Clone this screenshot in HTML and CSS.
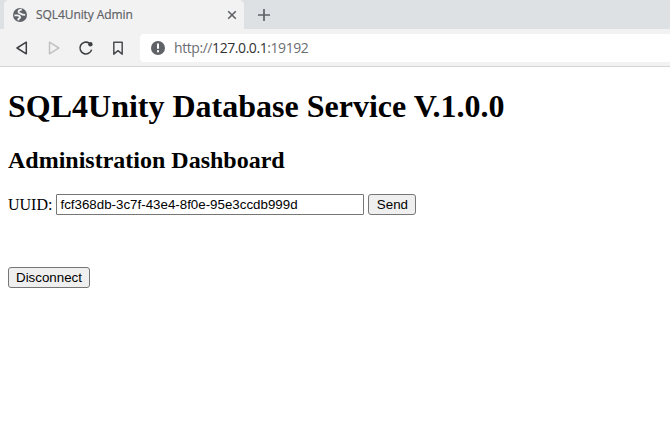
FILE: index.html
```html
<!DOCTYPE html>
<html lang="en">
<head>
<meta charset="utf-8">
<title>SQL4Unity Admin</title>
<link rel="stylesheet" href="styles.css">
</head>
<body>
<header class="browser">
  <div class="tabs">
    <div class="tab">
      <svg class="globe" width="14" height="14" viewBox="0 0 14 14"><circle cx="7" cy="7" r="7" fill="#5f6368"/><path d="M8.8 1.5C6.2 1.8 5.2 3 5.6 4.3c.4 1.2 2 .9 2.8 1.7.9.8 1.6 1 3.8.9M1.4 7.4h2.8c1.9 0 3 .8 2.9 2-.1 1-1.5.9-1.7 1.7l-.1 1.2" fill="none" stroke="#f2f2f2" stroke-width="1.9"/></svg>
      <span class="tab-title">SQL4Unity Admin</span>
      <svg class="close" width="10" height="10" viewBox="0 0 10 10"><path d="M1.2 1.2l7.6 7.6M8.8 1.2L1.2 8.8" stroke="#5f6368" stroke-width="1.6"/></svg>
    </div>
    <svg class="new-tab" width="12" height="12" viewBox="0 0 12 12"><path d="M6 0v12M0 6h12" stroke="#5f6368" stroke-width="1.7"/></svg>
  </div>
  <div class="toolbar">
    <svg class="tool" width="16" height="16" viewBox="0 0 16 16"><path d="M12.3 2.2v11.6L3 8z" fill="none" stroke="#3e4043" stroke-width="1.5" stroke-linejoin="round"/></svg>
    <svg class="tool" width="16" height="16" viewBox="0 0 16 16"><path d="M3.5 2.2v11.6L12.8 8z" fill="none" stroke="#c2c2c2" stroke-width="1.5" stroke-linejoin="round"/></svg>
    <svg class="tool" width="16" height="16" viewBox="0 0 16 16"><path d="M11.3 3.2A5.9 5.9 0 1 0 13.6 9.6" fill="none" stroke="#3e4043" stroke-width="1.6"/><circle cx="12.4" cy="4.3" r="2.2" fill="#3e4043"/></svg>
    <svg class="tool" width="16" height="16" viewBox="0 0 16 16"><path d="M3.8 2.2h8.4v12L8 10.7l-4.2 3.5z" fill="none" stroke="#4b4d50" stroke-width="1.5" stroke-linejoin="round"/></svg>
    <div class="address">
      <svg class="warning" width="14" height="14" viewBox="0 0 14 14"><circle cx="7" cy="7" r="7" fill="#5f6368"/><path d="M7 2.5v5.3M7 9.3v2" stroke="#fff" stroke-width="2"/></svg>
      <span class="url">http://<span class="host">127.0.0.1</span>:19192</span>
    </div>
  </div>
</header>
<main class="page">
  <h1>SQL4Unity Database Service V.1.0.0</h1>
  <h2>Administration Dashboard</h2>
  <form class="uuid-form">
    <label for="uuid">UUID:</label>
    <input id="uuid" type="text" value="fcf368db-3c7f-43e4-8f0e-95e3ccdb999d">
    <button class="send" type="button">Send</button>
  </form>
  <button class="disconnect" type="button">Disconnect</button>
</main>
</body>
</html>
```
FILE: styles.css
```css
* { box-sizing: border-box; }
body {
  margin: 0;
  background: #fff;
  color: #000;
  font-family: "Liberation Serif", serif;
  overflow: hidden;
}
svg { display: block; flex: none; }
.browser {
  height: 67px;
  background: #f2f2f2;
  border-bottom: 1px solid #d5d5d5;
  font-family: "Open Sans", "Noto Sans", sans-serif;
}
.tabs {
  display: flex;
  align-items: center;
  height: 29px;
  padding-left: 4px;
  background: #dee1e4;
}
.tab {
  display: flex;
  align-items: center;
  width: 240px;
  height: 29px;
  padding: 1px 7px 0 9px;
  background: #f2f2f2;
  border-radius: 5px 5px 0 0;
}
.tab-title {
  margin-left: 9px;
  color: #5f6368;
  font-size: 12px;
  letter-spacing: -0.08px;
  line-height: 16px;
  white-space: nowrap;
  -webkit-text-stroke: 0.2px #5f6368;
}
.close { margin-left: auto; }
.new-tab { margin: 1px 0 0 14px; }
.toolbar {
  display: flex;
  align-items: center;
  height: 37px;
  padding-left: 14px;
}
.tool { margin-right: 16px; }
.address {
  display: flex;
  align-items: center;
  flex: 1;
  height: 28px;
  margin-left: -2px;
  padding-left: 11px;
  background: #fff;
  border-radius: 4px 0 0 4px;
}
.url {
  margin-left: 9px;
  color: #6b6e72;
  font-size: 14px;
  letter-spacing: -0.43px;
  line-height: 20px;
}
.host { color: #333; }
.page { padding: 21px 8px 0; }
h1 { margin: 0; font-size: 32px; line-height: 37px; }
h2 { margin: 22px 0 0; font-size: 24px; line-height: 27px; }
.uuid-form {
  display: flex;
  align-items: center;
  height: 21px;
  margin-top: 20px;
  font-size: 16px;
}
input, button {
  height: 21px;
  border: 1px solid #767676;
  color: #000;
  font: 13.333px "Liberation Sans", sans-serif;
}
input {
  width: 308px;
  margin: 0 4px;
  padding: 1px 3px;
  background: #fff;
  border-radius: 1px;
}
button {
  padding: 0;
  background: #efefef;
  border-radius: 3px;
}
.send { width: 48px; }
.disconnect { display: block; width: 82px; margin-top: 52px; }
```
